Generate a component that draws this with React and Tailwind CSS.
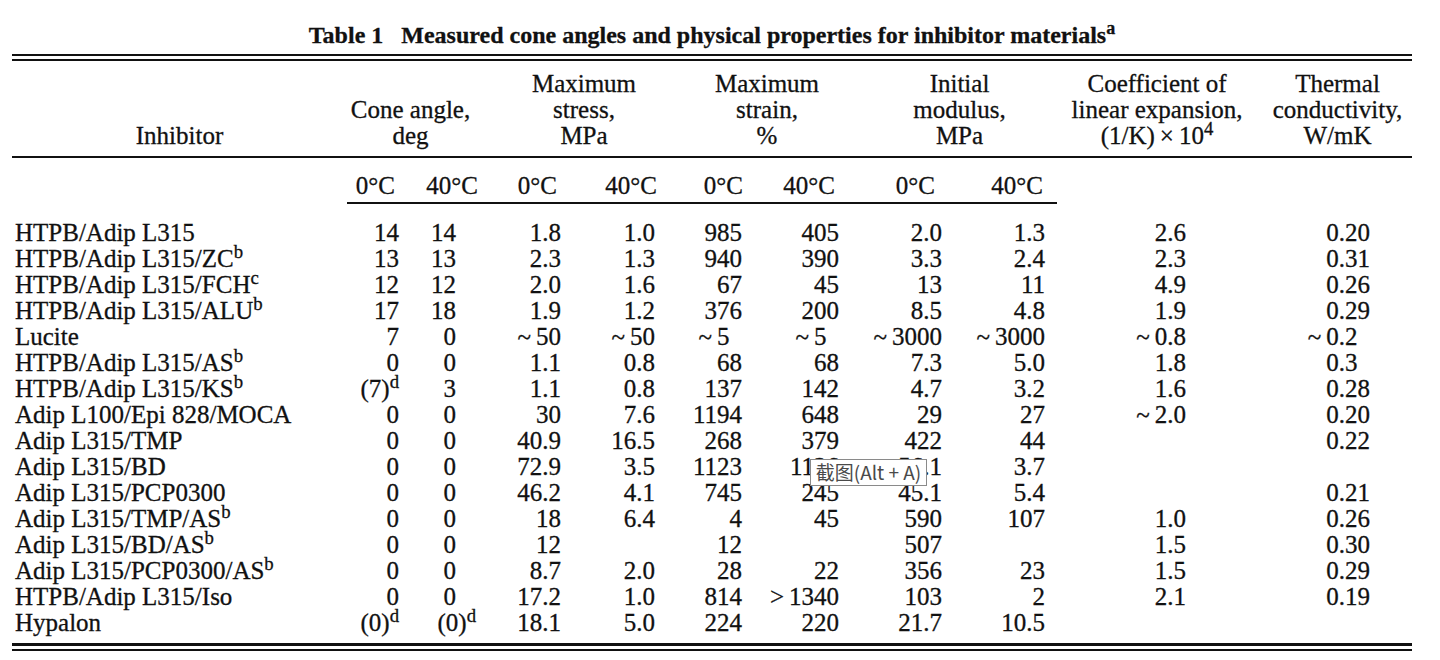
import React from 'react';

const grid =
  'grid grid-cols-[335px_60px_75px_100px_90px_90px_100px_100px_95px_200px_155px]';

// per-column alignment of the body cells
const cellCls = [
  'pl-[3px] text-left',
  'pr-[8px] text-right',
  'pr-[26px] text-right',
  'pr-[21px] text-right',
  'pr-[17px] text-right',
  'pr-[20px] text-right',
  'pr-[23px] text-right',
  'pr-[20px] text-right',
  'pr-[12px] text-right',
  'pr-[71px] text-right',
  'pr-[42px] text-right',
];

const subCls = [
  'pr-[12px]',
  'pr-[4px]',
  'pr-[25px]',
  'pr-[15px]',
  'pr-[19px]',
  'pr-[27px]',
  'pr-[27px]',
  'pr-[14px]',
];

const Sup = ({ children, hang }) => (
  <sup className={hang ? '-mr-[20px]' : ''}>{children}</sup>
);

// pads a value with an invisible digit so it sits one figure to the left
const Pad = ({ v }) => (
  <>
    {v}
    <span className="invisible">0</span>
  </>
);

const T = '~\u2009';

const rows = [
  ['HTPB/Adip L315', '14', '14', '1.8', '1.0', '985', '405', '2.0', '1.3', '2.6', '0.20'],
  [<>HTPB/Adip L315/ZC<Sup>b</Sup></>, '13', '13', '2.3', '1.3', '940', '390', '3.3', '2.4', '2.3', '0.31'],
  [<>HTPB/Adip L315/FCH<Sup>c</Sup></>, '12', '12', '2.0', '1.6', '67', '45', '13', '11', '4.9', '0.26'],
  [<>HTPB/Adip L315/ALU<Sup>b</Sup></>, '17', '18', '1.9', '1.2', '376', '200', '8.5', '4.8', '1.9', '0.29'],
  ['Lucite', '7', '0', T + '50', T + '50', <Pad v={T + '5'} />, <Pad v={T + '5'} />, T + '3000', T + '3000', T + '0.8', <Pad v={T + '0.2'} />],
  [<>HTPB/Adip L315/AS<Sup>b</Sup></>, '0', '0', '1.1', '0.8', '68', '68', '7.3', '5.0', '1.8', <Pad v="0.3" />],
  [<>HTPB/Adip L315/KS<Sup>b</Sup></>, <>(7)<Sup>d</Sup></>, '3', '1.1', '0.8', '137', '142', '4.7', '3.2', '1.6', '0.28'],
  ['Adip L100/Epi 828/MOCA', '0', '0', '30', '7.6', '1194', '648', '29', '27', T + '2.0', '0.20'],
  ['Adip L315/TMP', '0', '0', '40.9', '16.5', '268', '379', '422', '44', '', '0.22'],
  ['Adip L315/BD', '0', '0', '72.9', '3.5', '1123', '1126', '56.1', '3.7', '', ''],
  ['Adip L315/PCP0300', '0', '0', '46.2', '4.1', '745', '245', '45.1', '5.4', '', '0.21'],
  [<>Adip L315/TMP/AS<Sup>b</Sup></>, '0', '0', '18', '6.4', '4', '45', '590', '107', '1.0', '0.26'],
  [<>Adip L315/BD/AS<Sup>b</Sup></>, '0', '0', '12', '', '12', '', '507', '', '1.5', '0.30'],
  [<>Adip L315/PCP0300/AS<Sup>b</Sup></>, '0', '0', '8.7', '2.0', '28', '22', '356', '23', '1.5', '0.29'],
  ['HTPB/Adip L315/Iso', '0', '0', '17.2', '1.0', '814', '>\u20091340', '103', '2', '2.1', '0.19'],
  ['Hypalon', <>(0)<Sup>d</Sup></>, <>(0)<Sup hang>d</Sup></>, '18.1', '5.0', '224', '220', '21.7', '10.5', '', ''],
];

const Rule = ({ className }) => <div className={`bg-[#111] ${className}`} />;

export default function App() {
  return (
    <div className="relative min-h-[660px] w-[1440px] bg-white text-[#111] font-['Liberation_Serif','Times_New_Roman',serif] [-webkit-text-stroke:0.3px_#111]">
      <div className="ml-[12px] w-[1400px] pt-[21px]">
        {/* title */}
        <div className="h-[29px] text-center text-[24px] font-bold leading-[29px]">
          Table 1&nbsp;&nbsp; Measured cone angles and physical properties for inhibitor materials
          <sup>a</sup>
        </div>

        <Rule className="mt-[4px] h-[2px]" />
        <Rule className="mt-[3px] h-[2px]" />

        {/* column headings */}
        <div className={`${grid} pt-[10px] text-[25px] leading-[26px]`}>
          <div className="flex flex-col justify-end text-center">
            <span>Inhibitor</span>
          </div>
          <div className="col-span-2 flex flex-col justify-end pr-[8px] text-center">
            <span>Cone angle,</span>
            <span>deg</span>
          </div>
          <div className="col-span-2 flex flex-col justify-end pl-[14px] text-center">
            <span>Maximum</span>
            <span>stress,</span>
            <span>MPa</span>
          </div>
          <div className="col-span-2 flex flex-col justify-end text-center">
            <span>Maximum</span>
            <span>strain,</span>
            <span>%</span>
          </div>
          <div className="col-span-2 flex flex-col justify-end text-center">
            <span>Initial</span>
            <span>modulus,</span>
            <span>MPa</span>
          </div>
          <div className="flex flex-col justify-end text-center">
            <span>Coefficient of</span>
            <span>linear expansion,</span>
            <span>
              (1/K)&thinsp;×&thinsp;10<sup>4</sup>
            </span>
          </div>
          <div className="flex flex-col justify-end pl-[6px] text-center">
            <span>Thermal</span>
            <span>conductivity,</span>
            <span>W/mK</span>
          </div>
        </div>

        <Rule className="mt-[7px] h-[2px]" />

        {/* temperature sub headings */}
        <div className={`${grid} mt-[15px] text-[25px] leading-[26px]`}>
          <div />
          {['0°C', '40°C', '0°C', '40°C', '0°C', '40°C', '0°C', '40°C'].map((t, i) => (
            <div key={i} className={`text-right ${subCls[i]}`}>
              {t}
            </div>
          ))}
        </div>
        <div className={grid}>
          <div />
          <Rule className="col-span-8 mt-[3px] h-[2px]" />
        </div>

        {/* body */}
        <div className="mt-[16px] text-[25px] leading-[26px]">
          {rows.map((r, i) => (
            <div key={i} className={`${grid} h-[26px]`}>
              {r.map((c, j) => (
                <div key={j} className={`whitespace-nowrap ${cellCls[j]}`}>
                  {c}
                </div>
              ))}
            </div>
          ))}
        </div>

        <Rule className="mt-[7px] h-[3px]" />
        <Rule className="mt-[3px] h-[2px]" />
      </div>

      {/* screenshot-tool tooltip lying over the table */}
      <div className="absolute left-[810px] top-[459px] flex h-[27px] w-[117px] items-center justify-center border border-[#8a8a8a] bg-white text-[19px] text-[#4a4a4a] font-['Noto_Sans_CJK_SC','Noto_Sans',sans-serif] [-webkit-text-stroke:0px]">
        截图(Alt + A)
      </div>
    </div>
  );
}
